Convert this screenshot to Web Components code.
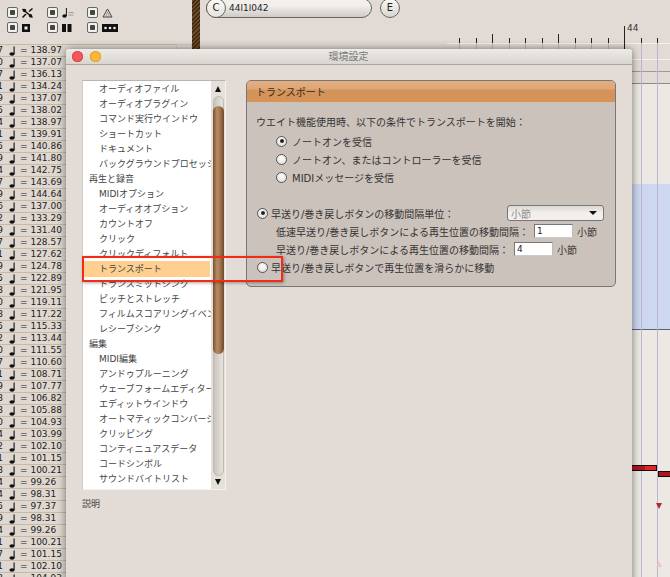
<!DOCTYPE html>
<html lang="ja"><head><meta charset="utf-8">
<style>
html,body{margin:0;padding:0;height:100%;overflow:hidden;background:#e2dbd5;font:9px "DejaVu Sans","Noto Sans CJK JP",sans-serif}
logic-desk{display:block}
</style></head><body>
<logic-desk></logic-desk>
<script>
const FONT='"DejaVu Sans","Noto Sans CJK JP",sans-serif';
function el(name,cls){cls.prototype.shadow=function(html){const r=this.shadowRoot||this.attachShadow({mode:'open'});r.innerHTML=html;return r};customElements.define(name,cls)}

const GLYPHS=[
 '<path d="M.5 1 10.5 9.5M.5 9.5 4 6M7 3.5 10.5.5" stroke="#111" stroke-width="1.5" fill="none"/><circle cx="2.5" cy="2.5" r="1.7" fill="#111"/><circle cx="8.5" cy="7.8" r="1.7" fill="#111"/>',
 '<ellipse cx="2.5" cy="8" rx="2.2" ry="1.7" fill="#111"/><path d="M4.4 8V0" stroke="#111" stroke-width="1"/><path d="M6.5 4.5h5M6.5 7h5" stroke="#999" stroke-width="1"/>',
 '<path d="M5.5 1 10 9H1Z" fill="none" stroke="#333" stroke-width=".9"/><path d="M5.5 4 7.5 8.5H4Z" fill="none" stroke="#888" stroke-width=".7"/>',
 '<rect x="0" y="1" width="8" height="8" fill="#111"/><rect x="2.5" y="3.5" width="3" height="3" fill="#eee"/>',
 '<rect x="0" y="1" width="4" height="8" fill="#111"/><rect x="5.5" y="1" width="4" height="8" fill="#111"/>',
 '<rect x="0" y="1" width="16" height="8" fill="#111"/><circle cx="3.5" cy="5" r="1.3" fill="#eee"/><circle cx="8" cy="5" r="1.3" fill="#eee"/><circle cx="12.5" cy="5" r="1.3" fill="#eee"/>'
];
el('toggle-chip',class extends HTMLElement{connectedCallback(){
 this.shadow(`<style>:host{display:flex;align-items:center;gap:4px;width:40px;height:15px}
 i{display:block;box-sizing:border-box;width:11px;height:11px;border:1px solid #666;border-radius:2px;background:#f3f0ec;position:relative;flex:none}
 i:after{content:"";position:absolute;left:2px;top:2px;width:5px;height:5px;background:#444;border-radius:1px}
 svg{width:17px;height:10px;overflow:visible}</style><i></i><svg viewBox="0 0 17 10">${GLYPHS[+this.getAttribute('g')]}</svg>`)}});

el('toggle-grid',class extends HTMLElement{connectedCallback(){
 this.shadow(`<style>:host{display:grid;grid-template-columns:repeat(3,40px);grid-auto-rows:15px;padding:5px 0 0 7px}</style>
 ${[0,1,2,3,4,5].map(g=>`<toggle-chip g="${g}"></toggle-chip>`).join('')}`)}});

el('tempo-row',class extends HTMLElement{connectedCallback(){
 this.shadow(`<style>:host{display:flex;align-items:center;box-sizing:border-box;height:12px;border-bottom:1px solid #c8b8a4;background:#dfd8d0;color:#222;font:9px/11px ${FONT};white-space:nowrap}
 b{font-weight:400;width:3px;overflow:hidden;direction:rtl;text-align:left;flex:none}
 svg{width:7px;height:10px;margin-left:6px;flex:none}
 u{text-decoration:none;margin-left:4px;letter-spacing:0}</style>
 <b>${this.getAttribute('n')}</b><svg viewBox="0 0 7 10"><ellipse cx="3" cy="8" rx="2.6" ry="1.8" fill="#111"/><path d="M5.1 8V.5" stroke="#111" stroke-width="1.1"/></svg><u>= ${this.getAttribute('v')}</u>`)}});

const TEMPOS='7 138.97,0 137.07,7 136.13,1 134.24,9 137.07,5 138.02,4 138.97,1 139.91,5 140.86,9 141.80,4 142.75,7 143.69,9 144.64,6 137.00,2 133.29,9 131.40,7 128.57,1 127.62,9 124.78,5 122.89,8 121.95,0 119.11,8 117.22,5 115.33,2 113.44,0 111.55,7 110.60,1 108.71,9 107.77,8 106.82,8 105.88,0 104.93,4 103.99,2 102.10,1 101.15,8 100.21,4 99.26,4 98.31,5 97.37,9 98.31,4 99.26,1 100.21,7 101.15,1 102.10,3 104.93'.split(',');
el('tempo-list',class extends HTMLElement{connectedCallback(){
 this.shadow(`<style>:host{display:block;width:66px;padding-top:1px;overflow:hidden}</style>
 ${TEMPOS.map(t=>{const[n,v]=t.split(' ');return `<tempo-row n="${n}" v="${v}"></tempo-row>`}).join('')}`)}});

el('locator-bar',class extends HTMLElement{connectedCallback(){
 this.shadow(`<style>:host{display:flex;align-items:center;gap:8px;height:17px;margin-top:-1px;font:9px ${FONT};color:#222}
 .c{box-sizing:border-box;width:20px;height:20px;flex:none;border:1px solid #666;border-radius:50%;display:grid;place-items:center;background:linear-gradient(#fbfaf8,#d8d4ce);font-size:10px}
 .p{box-sizing:border-box;width:166px;height:20px;border:1px solid #666;border-radius:10px;background:linear-gradient(#f2efec 0,#f2efec 35%,#cfcbc5);display:flex;align-items:center}
 .p .c{margin-left:-1px;background:linear-gradient(#fbfaf8,#e6e3de)} .p span{margin-left:3px;font-size:9px}</style>
 <div class="p"><div class="c">C</div><span>44l1l042</span></div><div class="c">E</div>`)}});

el('arrange-canvas',class extends HTMLElement{connectedCallback(){
 const xs=[459,476,492,509,525,542,558,575,591,608,624,641,657];
 const ticks=xs.map(x=>{const big=[492,558].includes(x);const bar=x==624;
   return `<i style="position:absolute;left:${x}px;top:${bar?26:big?34:38}px;width:1px;height:${bar?23:big?9:5}px;background:#222"></i>`}).join('');
 const vl=xs.map(x=>`<i style="position:absolute;left:${x}px;top:43px;width:1px;height:534px;background:#bcb6cc"></i>`).join('');
 this.shadow(`<style>:host{position:absolute;left:0;top:0;width:670px;height:577px;overflow:hidden;display:block}
 .band{position:absolute;left:447px;right:0}
 i{display:block}
 .tri{position:absolute;left:656px;width:0;height:0;border-left:3px solid transparent;border-right:3px solid transparent}
 .note{position:absolute;box-sizing:border-box;height:6px;border:1px solid #1a0505;background:linear-gradient(90deg,#a8181c 70%,#e02428 70%)}
 .n{position:absolute;left:627px;top:23px;font:9px/11px ${FONT};color:#333}</style>
 <div style="position:absolute;left:0;top:44px;width:176px;height:1px;background:#c8b8a4"></div>
 <div style="position:absolute;left:176px;top:44px;width:16px;height:6px;box-sizing:border-box;border:1px solid #cfc8c0"></div>
 <div class="band" style="top:84px;bottom:0;background:#ece8e3"></div>
 <div class="band" style="top:184px;height:145px;background:#cdd7ef"></div>
 <div class="band" style="top:43px;height:1px;background:#f3f0ed"></div>
 <div class="band" style="top:59px;height:1px;background:#f3f0ed"></div>
 <div class="band" style="top:71px;height:1px;background:#9d98a8"></div>
 <div class="band" style="top:83px;height:1px;background:#8d8895"></div>
 <div class="band" style="top:329px;height:1px;background:#5b6177"></div>
 ${vl}${ticks}<span class="n">44</span>
 <div class="note" style="left:620px;top:465px;width:37px"></div>
 <div class="note" style="left:658px;top:471px;width:20px;background:#a8181c"></div>
 <div class="tri" style="top:503px;border-top:6px solid #b02a3c"></div>
 <div class="tri" style="top:561px;border-bottom:6px solid #f5c0c8"></div>`)}});

el('mac-titlebar',class extends HTMLElement{connectedCallback(){
 this.shadow(`<style>:host{display:flex;align-items:center;justify-content:center;position:relative;box-sizing:border-box;height:16px;background:linear-gradient(#eeeae6,#d8d4cf);border-bottom:1px solid #a8a5a1;border-radius:3px 3px 0 0;font:10px/15px ${FONT};color:#777}
 .d{position:absolute;top:2px;width:11px;height:11px;border-radius:50%}
 </style><span class="d" style="left:6px;background:#f5565a;box-shadow:inset 0 0 0 1px #d84a4a"></span><span class="d" style="left:24px;background:#fcb73a;box-shadow:inset 0 0 0 1px #e0a030"></span><span style="margin-left:-1px">環境設定</span>`)}});

el('pref-item',class extends HTMLElement{connectedCallback(){
 const h=this.hasAttribute('head'),s=this.hasAttribute('sel');
 this.shadow(`<style>:host{display:flex;align-items:center;height:15px;box-sizing:border-box;padding-left:${h?6:16}px;font:9px/15px ${FONT};color:#444;white-space:nowrap;overflow:hidden}
 ${s?':host{height:16px;margin:-1px 1px 0 0;padding-top:1px;background:#ffcf90}':''}</style><slot></slot>`)}});

el('brown-scrollbar',class extends HTMLElement{connectedCallback(){
 this.shadow(`<style>:host{display:flex;flex-direction:column;align-items:center;box-sizing:border-box;width:15px;background:#e6e0da;position:relative}
 .a{width:0;height:0;border-left:3.5px solid transparent;border-right:3.5px solid transparent;flex:none}
 .t{position:absolute;left:2px;top:15px;width:11px;height:380px;box-sizing:border-box;border:1px solid #bdb8b2;border-radius:6px;background:linear-gradient(90deg,#c8c3bd,#dcd7d1 60%,#e8e3dd)}
 .h{position:absolute;left:2px;top:25px;width:11px;height:248px;border-radius:6px;background:linear-gradient(90deg,#76502f,#b68a62 35%,#a87b52 60%,#6d4a2c)}
 </style><div class="a" style="margin-top:5px;border-bottom:6px solid #111"></div><div class="t"></div><div class="h"></div><div style="flex:1"></div><div class="a" style="margin-bottom:4px;border-top:6px solid #111"></div>`)}});

const ITEMS=[['オーディオファイル'],['オーディオプラグイン'],['コマンド実行ウインドウ'],['ショートカット'],['ドキュメント'],['バックグラウンドプロセッシング'],['再生と録音',1],['MIDIオプション'],['オーディオオプション'],['カウントオフ'],['クリック'],['クリックディフォルト'],['トランスポート',2],['トランスミットシンク'],['ピッチとストレッチ'],['フィルムスコアリングイベント'],['レシーブシンク'],['編集',1],['MIDI編集'],['アンドゥプルーニング'],['ウェーブフォームエディター'],['エディットウインドウ'],['オートマティックコンバージョン'],['クリッピング'],['コンティニュアスデータ'],['コードシンボル'],['サウンドバイトリスト']];
el('pref-list',class extends HTMLElement{connectedCallback(){
 this.shadow(`<style>:host{display:flex;box-sizing:border-box;width:144px;height:410px;border:1px solid #f4f1ee;border-top-color:#b8b4b0;border-left-color:#cfcbc7;background:#fff}
 .l{width:128px;flex:none;background:#fff;overflow:hidden;padding-top:1px}</style>
 <div class="l">${ITEMS.map(([t,k])=>`<pref-item ${k==1?'head':k==2?'sel':''}>${t}</pref-item>`).join('')}</div><brown-scrollbar></brown-scrollbar>`)}});

el('radio-row',class extends HTMLElement{connectedCallback(){
 const on=this.hasAttribute('on');
 this.shadow(`<style>:host{display:flex;align-items:center;gap:var(--radio-gap,3px);height:18px;white-space:nowrap}
 i{display:block;box-sizing:border-box;flex:none;width:11px;height:11px;border:1px solid #555;border-radius:50%;background:radial-gradient(circle at 50% 35%,#fff,#dcd8d4);position:relative}
 ${on?'i:after{content:"";position:absolute;left:2.5px;top:2.5px;width:4px;height:4px;border-radius:50%;background:#222}':''}</style><i></i><span><slot></slot></span>`)}});

el('num-field',class extends HTMLElement{connectedCallback(){
 this.shadow(`<style>:host{display:block;box-sizing:border-box;width:39px;height:14px;border:1px solid #777;border-right-color:#bbb;border-bottom-color:#ccc;background:#fff;padding-left:2px;font:9px/12px ${FONT};color:#222}</style><slot></slot>`)}});

el('unit-select',class extends HTMLElement{connectedCallback(){
 this.shadow(`<style>:host{display:flex;align-items:center;justify-content:space-between;box-sizing:border-box;width:97px;height:16px;border:1px solid #777;border-radius:3px;background:linear-gradient(#dcd8d4,#f2efec 50%);padding:0 6px 0 3px;color:#888;font:10px ${FONT}}
 i{width:0;height:0;border-left:4px solid transparent;border-right:4px solid transparent;border-top:4px solid #111}</style><span><slot></slot></span><i></i>`)}});

el('transport-panel',class extends HTMLElement{connectedCallback(){
 this.shadow(`<style>:host{display:block;box-sizing:border-box;width:370px;height:207px;border:1px solid #777;border-radius:5px;background:#ccc2bc;font:10px ${FONT};color:#333;overflow:hidden}
 .h{height:21px;box-sizing:border-box;padding:4px 0 0 9px;line-height:16px;color:#3a2a1a;background:linear-gradient(#e3ae80,#dfa676 38%,#d49358 44%)}
 .b{padding:12px 0 0 9px}
 .lead{height:18px;line-height:18px}
 .sub{padding-left:21px;margin-top:0}
 .f{display:flex;align-items:center;white-space:nowrap;height:18px}
 .f em{font-style:normal;margin-left:4px}
 .top{display:flex;justify-content:space-between;align-items:center;padding-right:11px;margin-top:18px;height:18px}
 .ind{margin-left:20px;--radio-gap:5px}</style>
 <div class="h">トランスポート</div>
 <div class="b">
  <div class="lead">ウエイト機能使用時、以下の条件でトランスポートを開始：</div>
  <div class="ind"><radio-row on>ノートオンを受信</radio-row><radio-row>ノートオン、またはコントローラーを受信</radio-row><radio-row>MIDIメッセージを受信</radio-row></div>
  <div class="top" style="margin-left:1px"><radio-row on>早送り/巻き戻しボタンの移動間隔単位：</radio-row><unit-select>小節</unit-select></div>
  <div class="sub f" style="margin-left:-1px"><span>低速早送り/巻き戻しボタンによる再生位置の移動間隔：</span><num-field style="margin-left:5px">1</num-field><em>小節</em></div>
  <div class="sub f" style="margin-left:-1px"><span>早送り/巻き戻しボタンによる再生位置の移動間隔：</span><num-field style="margin-left:5px">4</num-field><em>小節</em></div>
  <div style="margin-left:1px"><radio-row>早送り/巻き戻しボタンで再生位置を滑らかに移動</radio-row></div>
 </div>`)}});

el('pref-window',class extends HTMLElement{connectedCallback(){
 this.shadow(`<style>:host{position:absolute;left:66px;top:49px;width:566px;height:540px;display:block;background:#e3dcd6;border-radius:4px 4px 0 0;box-shadow:0 0 9px rgba(0,0,0,.5);font:9px ${FONT};color:#444}
 .m{display:flex;align-items:flex-start;gap:20px;padding:15px 0 0 16px}
 .desc{margin:7px 0 0 16px;line-height:14px}</style>
 <mac-titlebar></mac-titlebar>
 <div class="m"><pref-list></pref-list><transport-panel></transport-panel></div>
 <div class="desc">説明</div>`)}});

el('logic-desk',class extends HTMLElement{connectedCallback(){
 this.shadow(`<style>:host{position:relative;display:block;width:670px;height:577px;overflow:hidden;background:#e2dbd5}
 .top{position:relative;display:flex;height:44px}
 .hatch{width:8px;height:49px;margin-left:65px;background:repeating-linear-gradient(135deg,#6a4a28 0 1.5px,#3e2a14 1.5px 3px);flex:none}
 .flag{position:absolute;left:82px;top:256px;width:201px;height:26px;box-sizing:border-box;border:2px solid #f42a16;box-shadow:1px 1px 3px rgba(0,0,0,.35)}
 tempo-list{position:relative}</style>
 <arrange-canvas></arrange-canvas>
 <div class="top"><toggle-grid></toggle-grid><div class="hatch"></div><div style="margin-left:6px"><locator-bar></locator-bar></div></div>
 <tempo-list></tempo-list>
 <pref-window></pref-window>
 <div class="flag"></div>`)}});
</script></body></html>
